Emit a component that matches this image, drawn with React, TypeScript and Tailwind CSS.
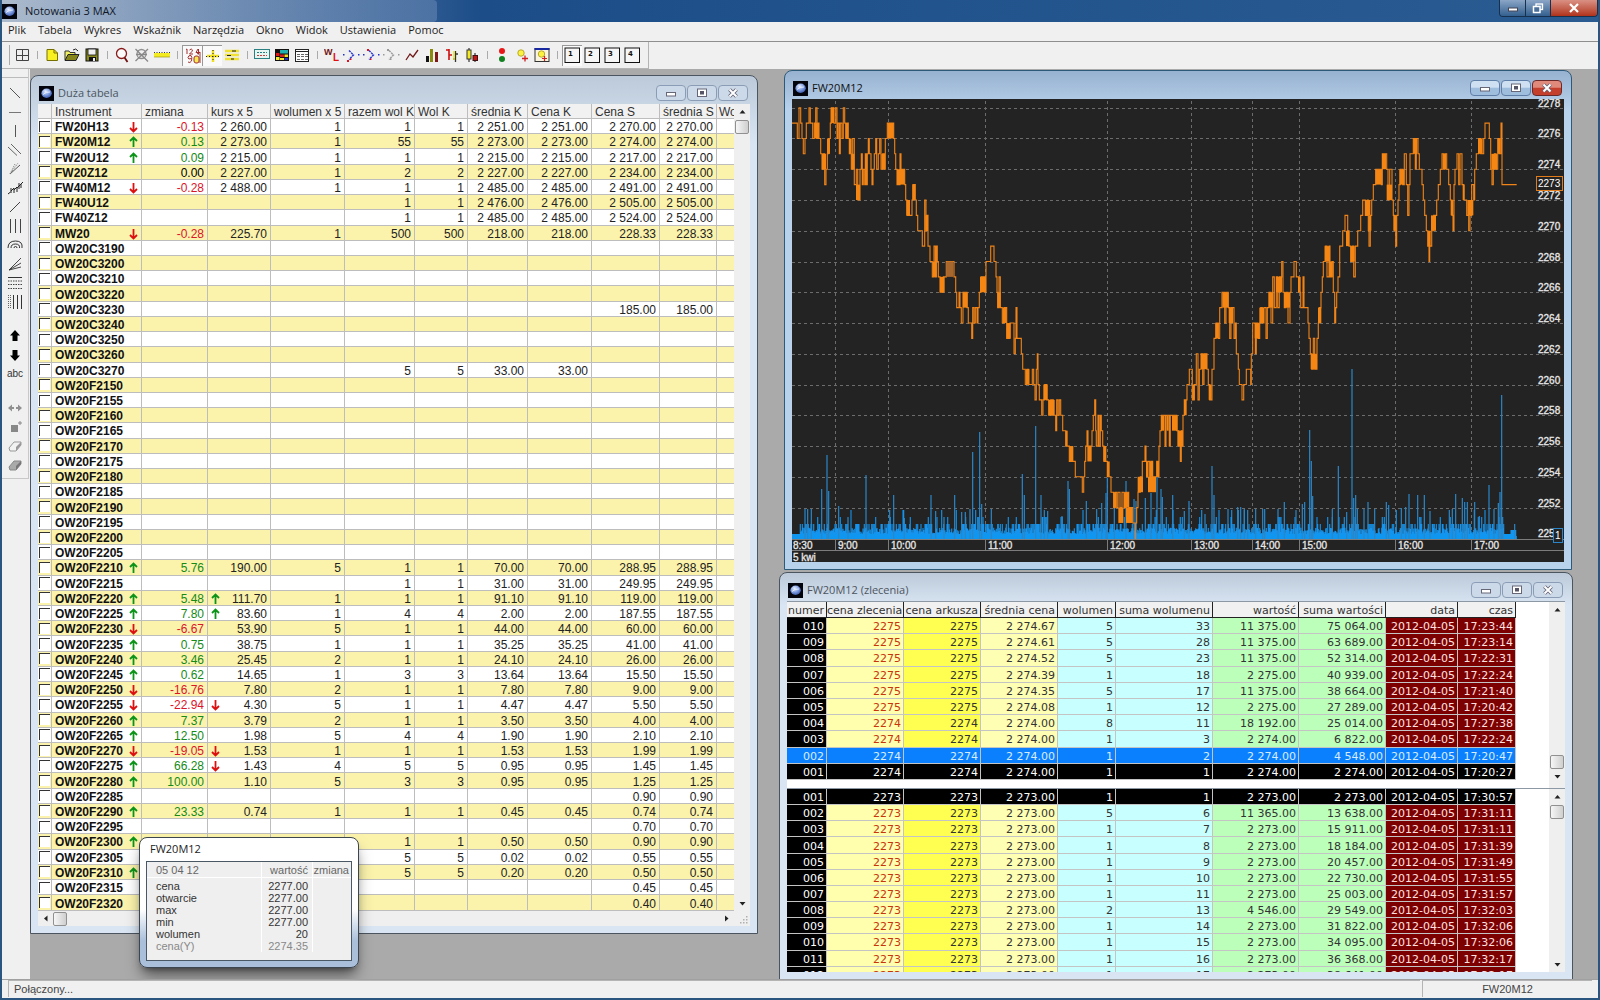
import type { ReactNode } from "react";
import { clsx } from "clsx";

const menuItems = ["Plik", "Tabela", "Wykres", "Wskaźnik", "Narzędzia", "Okno", "Widok", "Ustawienia", "Pomoc"];

/* ---------- icons ---------- */

function Icon({ children, w = 16 }: { children: ReactNode; w?: number }) {
  return (
    <svg width={w} height="16" viewBox={`0 0 ${w} 16`} fill="none" stroke="none" aria-hidden="true">
      {children}
    </svg>
  );
}

function AppIcon() {
  return (
    <svg width="15" height="15" viewBox="0 0 15 15" aria-hidden="true" className="shrink-0">
      <defs>
        <radialGradient id="orb" cx="0.4" cy="0.3" r="0.8">
          <stop offset="0" stopColor="#e6efff" />
          <stop offset="0.5" stopColor="#7f9de0" />
          <stop offset="1" stopColor="#2c4aa0" />
        </radialGradient>
      </defs>
      <rect width="15" height="15" fill="#03040c" />
      <ellipse cx="7.6" cy="7.3" rx="5.2" ry="4.7" fill="url(#orb)" />
      <path d="M4 8.5 Q7 5.5 11 6" stroke="#f4f8ff" strokeWidth="1" fill="none" opacity="0.8" />
    </svg>
  );
}

function DottedArrow({ color, dot }: { color: string; dot: string }) {
  return (
    <Icon w={18}>
      <path d="M6 3.500L10.500 8L6 12.500" stroke={color} strokeWidth="1.400" strokeDasharray="2.200 0.800" />
      <rect x="0" y="7" width="1.500" height="1.500" fill={color} />
      <rect x="15" y="7" width="1.500" height="1.500" fill={color} />
      <rect x="4" y={dot === "top" ? 2 : 13} width="2" height="2" fill={color === "#999" ? "#999" : "#e01020"} />
      <rect x="7" y="11.500" width="1.500" height="1.500" fill={color === "#999" ? "#999" : "#e01020"} />
    </Icon>
  );
}

function NumberBox({ n }: { n: string }) {
  return (
    <svg width="17" height="17" viewBox="0 0 17 17" aria-hidden="true">
      <rect x="1" y="1" width="14.500" height="14.500" fill="#f6f6f6" stroke="#111" />
      <text x="4" y="9" fontSize="7" fontWeight="700" fontFamily="DejaVu Sans, sans-serif" fill="#111">
        {n}
      </text>
    </svg>
  );
}

const toolGroups: { name: string; icon: ReactNode; pressed?: boolean }[][] = [
  [
    {
      name: "Okna",
      icon: (
        <Icon>
          <path d="M2.500 2.500H14.500V13.500H2.500ZM8.500 2.500V13.500M2.500 8.500H14.500" stroke="#444" />
        </Icon>
      ),
    },
  ],
  [
    {
      name: "Nowy",
      icon: (
        <Icon>
          <path d="M3 2.500H10L13.500 6V13.500H3Z" fill="#f8f020" stroke="#777000" />
          <path d="M10 2.500V6H13.500" stroke="#777000" />
        </Icon>
      ),
    },
    {
      name: "Otwórz",
      icon: (
        <Icon>
          <path d="M1 13V4H5L6 5.500H11V7.500" fill="#f0f060" stroke="#333" />
          <path d="M1 13.500L4 7.500H15L12 13.500Z" fill="#85851a" stroke="#222" />
          <path d="M9 3Q12 0.500 14 4" stroke="#222" />
        </Icon>
      ),
    },
    {
      name: "Zapisz",
      icon: (
        <Icon>
          <rect x="2" y="2" width="12" height="12" fill="#8a8a20" stroke="#111" />
          <rect x="4" y="2" width="8" height="6" fill="#eee" stroke="#111" strokeWidth="0.800" />
          <rect x="5" y="10" width="7" height="4" fill="#111" />
          <rect x="9" y="11" width="2" height="3" fill="#eee" />
        </Icon>
      ),
    },
  ],
  [
    {
      name: "Lupa",
      icon: (
        <Icon>
          <circle cx="7.500" cy="6.500" r="5" stroke="#8a1a1a" strokeWidth="1.300" fill="#fafafa" />
          <path d="M10.500 10.500L13.500 15" stroke="#701010" strokeWidth="1.800" />
        </Icon>
      ),
    },
    {
      name: "Cofnij lupę",
      icon: (
        <Icon>
          <circle cx="7.500" cy="7" r="4.500" stroke="#909090" strokeWidth="1.300" />
          <path d="M1.500 2L14 14.500M14 2L1.500 14M2 7.500H13" stroke="#888" strokeWidth="1.300" />
        </Icon>
      ),
    },
    {
      name: "Linijka",
      icon: (
        <Icon>
          <rect x="0" y="6" width="16" height="4" fill="#f4ec20" />
          <path d="M0 5.500H16" stroke="#333" strokeDasharray="1 1.500" />
          <path d="M0 10H16" stroke="#a09a10" strokeWidth="0.700" />
        </Icon>
      ),
    },
  ],
  [
    {
      name: "Wartości",
      pressed: true,
      icon: (
        <Icon>
          <g stroke="#a03030" strokeWidth="1">
            <path d="M1 1.500L2 1V6M4.500 2Q6.500 0 7.500 2Q7.500 3.500 4.500 6H8M13 1L11 4.500H15M13.500 1V6.500" />
            <path d="M6.500 10.500Q3 12 3 9.500Q3.500 7 6 7.500Q7.500 9 6.500 13Q5 15.500 3 14" />
          </g>
          <rect x="9" y="8" width="5" height="7" rx="2" fill="#f8e850" stroke="#a03030" />
          <path d="M12 6L15 4V15" stroke="#a03030" />
        </Icon>
      ),
    },
    {
      name: "Krzyż",
      pressed: true,
      icon: (
        <Icon>
          <path d="M8 2V14M2 8H14" stroke="#f0e020" strokeWidth="2.500" />
          <path d="M8 2V14M1 8.500H15" stroke="#222" strokeDasharray="1 2" />
        </Icon>
      ),
    },
    {
      name: "Poziomy",
      icon: (
        <Icon>
          <path d="M1 4H15M1 8H15M1 12H15" stroke="#f0e030" strokeWidth="2.400" />
          <path d="M8 4H12M3 8.500H7M7 12H10" stroke="#222" strokeWidth="1" />
        </Icon>
      ),
    },
  ],
  [
    {
      name: "Tabelka",
      icon: (
        <Icon>
          <rect x="0.500" y="2.500" width="15" height="9" fill="#e8f4f0" stroke="#2a8080" />
          <path d="M3 5.500H13" stroke="#208080" strokeDasharray="2 1" />
          <path d="M3 8.500H13" stroke="#c04040" strokeDasharray="2 1" />
        </Icon>
      ),
    },
    {
      name: "Kolory",
      icon: (
        <Icon>
          <rect x="1" y="2" width="14" height="12" fill="#111" />
          <path d="M6 3H14V6.500H6Z" fill="#20b0b0" />
          <path d="M2 6H5.500V9H2Z" fill="#e01818" />
          <path d="M6 7.500H10V10H6Z" fill="#d02020" />
          <path d="M10.500 7.500H14V10H10.500Z" fill="#f0e020" />
          <path d="M2 10H5.500V13H2Z" fill="#f4ec30" />
          <path d="M6 11H10V13H6Z" fill="#f4ec30" />
          <path d="M10.500 11H14V13H10.500Z" fill="#2030c0" />
        </Icon>
      ),
    },
    {
      name: "Notowania",
      icon: (
        <Icon>
          <rect x="1.500" y="2.500" width="13" height="12" fill="#fdfdfd" stroke="#222" />
          <path d="M1 4.500H15" stroke="#222" />
          <path d="M3 7.500H14M3 9.500H14M3 12.500H14" stroke="#666" strokeDasharray="3 1" />
        </Icon>
      ),
    },
  ],
  [
    {
      name: "WL",
      icon: (
        <Icon>
          <text x="0" y="8" fontSize="9" fontWeight="700" fontFamily="Liberation Sans, sans-serif" fill="#701010">
            W
          </text>
          <text x="9" y="14" fontSize="10" fontWeight="700" fontFamily="Liberation Sans, sans-serif" fill="#e01010">
            L
          </text>
        </Icon>
      ),
    },
    { name: "Wstecz", icon: <DottedArrow color="#2030d0" dot="bottom" /> },
    { name: "Dalej", icon: <DottedArrow color="#2030d0" dot="top" /> },
    { name: "Stop", icon: <DottedArrow color="#999" dot="top" /> },
    {
      name: "Liniowy",
      icon: (
        <Icon>
          <path d="M2 13L6 7L9 10L14 3" stroke="#701818" strokeWidth="1.300" />
        </Icon>
      ),
    },
    {
      name: "Słupkowy",
      icon: (
        <Icon>
          <rect x="2" y="9" width="3" height="6" fill="#111" />
          <rect x="6" y="2" width="3" height="13" fill="#8a8a10" />
          <rect x="11" y="5" width="3" height="10" fill="#801818" />
        </Icon>
      ),
    },
    {
      name: "OHLC",
      icon: (
        <Icon>
          <path d="M5 2V13M2 3H5M5 8H8" stroke="#d01010" strokeWidth="1.600" />
          <path d="M11.500 4V15M9 12H11M11 7H14" stroke="#333" strokeWidth="1.300" />
          <path d="M10 4V13" stroke="#e8e020" strokeWidth="1.500" />
        </Icon>
      ),
    },
    {
      name: "Świecowy",
      icon: (
        <Icon>
          <path d="M5 1V15" stroke="#111" />
          <rect x="3" y="3" width="4" height="9" fill="#f4ec20" stroke="#333" />
          <path d="M11 6V15" stroke="#111" />
          <rect x="9" y="8.500" width="4.500" height="5" fill="#c01818" stroke="#401010" />
        </Icon>
      ),
    },
  ],
  [
    {
      name: "Światła",
      icon: (
        <Icon>
          <circle cx="8" cy="4" r="3" fill="#e81818" />
          <circle cx="8" cy="12" r="3" fill="#108020" />
        </Icon>
      ),
    },
    {
      name: "Alarm",
      icon: (
        <Icon>
          <circle cx="7" cy="6" r="3.200" fill="#fbf340" stroke="#b8a830" />
          <path d="M8 11.500H14M11 8.500V14.500" stroke="#d02020" strokeWidth="1.300" />
        </Icon>
      ),
    },
    {
      name: "Alarm okna",
      icon: (
        <Icon>
          <rect x="1" y="1.500" width="14" height="13" fill="#f8f4e0" stroke="#333" />
          <rect x="0.500" y="1" width="15" height="2" fill="#1828a0" />
          <circle cx="7.500" cy="7" r="3.200" fill="#fbf340" stroke="#b8a830" />
          <path d="M8 11.500H13M10.500 9V14" stroke="#d02020" strokeWidth="1.200" />
        </Icon>
      ),
    },
  ],
  [
    { name: "Pulpit 1", icon: <NumberBox n="1" />, pressed: true },
    { name: "Pulpit 2", icon: <NumberBox n="2" /> },
    { name: "Pulpit 3", icon: <NumberBox n="3" /> },
    { name: "Pulpit 4", icon: <NumberBox n="4" /> },
  ],
];

const drawGroups: ReactNode[][] = [
  [
    <Icon><path d="M3 3L13 13" stroke="#555" /></Icon>,
    <Icon><path d="M2 8.500H14" stroke="#777" /></Icon>,
    <Icon><path d="M8.500 2V14" stroke="#555" /></Icon>,
    <Icon><path d="M1 5L10 13.500M4 2L14 12" stroke="#555" strokeWidth="0.900" /></Icon>,
    <Icon><path d="M3 13L13 4" stroke="#444" strokeWidth="0.900" /><path d="M3 13L8 3M3 13L11 2" stroke="#777" strokeDasharray="1 1" /></Icon>,
    <Icon w={18}><path d="M2 14L4.500 12M5 13V8M5 11L8 8V13M8 10L11 7V12M11 8L14 5M13 9V3M14 5L17 2M15 8V4" stroke="#222" /></Icon>,
    <Icon><path d="M3 13L13 3" stroke="#444" /></Icon>,
    <Icon><path d="M3.500 1V15M8.500 1V15M13.500 1V15" stroke="#444" /></Icon>,
    <Icon><path d="M1 11Q1 4 8.500 4T15 11M4 11Q4 7 8.500 7T12.500 11M7 11Q7 9.500 8.500 9.500T10 11" stroke="#333" /></Icon>,
    <Icon><path d="M2 14L14 2M2 14L14 7M2 14L14 11" stroke="#333" strokeWidth="0.900" /></Icon>,
    <Icon><path d="M1 2.500H15" stroke="#333" /><path d="M1 6H15M1 9.500H15M1 13.500H15" stroke="#444" strokeDasharray="1.500 1" /></Icon>,
    <Icon><path d="M1.500 1V15M3.500 1V15" stroke="#666" strokeDasharray="1 1" /><path d="M6.500 1V15M10.500 1V15M14.500 1V15" stroke="#333" /></Icon>,
  ],
  [
    <Icon><path d="M8 2L13 7.500H10.500V13H5.500V7.500H3Z" fill="#000" /></Icon>,
    <Icon><path d="M8 14L13 8.500H10.500V3H5.500V8.500H3Z" fill="#000" /></Icon>,
    <span className="text-[10px] leading-4 text-[#333]">abc</span>,
  ],
  [
    <Icon><path d="M1 8L5 4.500V7H7V9H5V11.500ZM15 8L11 4.500V7H9V9H11V11.500Z" fill="#909090" /></Icon>,
    <Icon><path d="M4 6H11V13H4Z" fill="#888" /><path d="M13 2V6M11 4H15" stroke="#888" /></Icon>,
    <Icon><path d="M2 10L7 4H14V7L9 13H3Z" fill="#f2f2f2" stroke="#999" /><path d="M9 9L14 4V7L9 13Z" fill="#999" /></Icon>,
    <Icon><path d="M2 10L7 4H14V7L9 13H3Z" fill="#aaa" stroke="#888" /><path d="M9 9L14 4V7L9 13Z" fill="#777" /></Icon>,
  ],
];

/* ---------- window frame ---------- */

const controlBase = "flex h-4 w-[30px] items-center justify-center rounded-sm border";

function WindowControls({ active }: { active?: boolean }) {
  const normal = active
    ? "border-[#5f7fa8] bg-linear-to-b from-[#cfe0f2] from-45% to-[#9fbddd] to-50%"
    : "border-[#8b9db6] bg-[#ccd9e8]";
  return (
    <div className="flex gap-px pr-[2px]">
      <button type="button" aria-label="Minimalizuj" className={clsx(controlBase, normal)}>
        <svg width="12" height="10" viewBox="0 0 12 10">
          <rect x="1.500" y="4.500" width="9" height="3.500" fill="#fff" stroke="#667" />
        </svg>
      </button>
      <button type="button" aria-label="Maksymalizuj" className={clsx(controlBase, normal)}>
        <svg width="12" height="10" viewBox="0 0 12 10">
          <rect x="1.500" y="1" width="9" height="7.500" fill="#fff" stroke="#667" />
          <rect x="4.500" y="3.500" width="3" height="2.500" fill="#556" stroke="#556" />
        </svg>
      </button>
      <button
        type="button"
        aria-label="Zamknij"
        className={clsx(
          controlBase,
          active ? "border-[#6b2a2a] bg-linear-to-b from-[#e08a7c] from-45% to-[#c4402c] to-50%" : normal
        )}
      >
        <svg width="12" height="10" viewBox="0 0 12 10">
          <path d="M2.500 1.500L9.500 8.500M9.500 1.500L2.500 8.500" stroke="#667" strokeWidth="3.800" />
          <path d="M2.500 1.500L9.500 8.500M9.500 1.500L2.500 8.500" stroke="#fff" strokeWidth="2" />
        </svg>
      </button>
    </div>
  );
}

type ChildWindowProps = { title: string; active?: boolean; className: string; children: ReactNode };

function ChildWindow({ title, active, className, children }: ChildWindowProps) {
  return (
    <section
      className={clsx(
        "absolute flex flex-col rounded-t-lg border px-[7px] pb-[7px]",
        active
          ? "border-[#2c5a78] bg-[#b3cdea] bg-linear-to-b from-[#97b2d0] to-[#b9d2ec] to-8%"
          : "border-[#4b5560] bg-[#d7e3f1] bg-linear-to-b from-[#bccad9] to-[#d9e5f3] to-8%",
        className
      )}
    >
      <header className="flex h-7 shrink-0 items-center gap-1 pt-[6px] pl-px font-[Open_Sans,sans-serif] text-[11px]">
        <AppIcon />
        <h2 className={clsx("flex-1", active ? "text-[#111]" : "text-[#4c5560]")}>{title}</h2>
        <WindowControls active={active} />
      </header>
      <div className="flex min-h-0 flex-1 flex-col">{children}</div>
    </section>
  );
}

/* ---------- scroll bars ---------- */

function Triangle({ d }: { d: string }) {
  return (
    <svg width="15" height="15" viewBox="0 0 15 15" className="shrink-0" aria-hidden="true">
      <path d={d} fill="#222" />
    </svg>
  );
}

const UP = "M4.500 9.500L7.500 6L10.500 9.500Z";
const DOWN = "M4.500 6L7.500 9.500L10.500 6Z";
const LEFT = "M9.500 4.500L6 7.500L9.500 10.500Z";
const RIGHT = "M6 4.500L9.500 7.500L6 10.500Z";
const thumb = "size-[14px] shrink-0 rounded-xs border border-[#909090] bg-linear-to-r from-[#f6f6f6] to-[#cfcfcf]";

function VScroll({ atEnd }: { atEnd?: boolean }) {
  return (
    <div className={clsx("flex w-4 shrink-0 flex-col items-center bg-[#efefef]", atEnd ? "pb-1" : "gap-px")}>
      <Triangle d={UP} />
      {atEnd && <div className="flex-1" />}
      <div className={thumb} />
      {!atEnd && <div className="flex-1" />}
      <Triangle d={DOWN} />
    </div>
  );
}

/* ---------- quotes table ---------- */

type Dir = "up" | "down" | "";
type Quote = { name: string; dir?: Dir; kursDir?: Dir; cells?: string[] };

const quoteColumns = ["zmiana", "kurs x 5", "wolumen x 5", "razem wol K", "Wol K", "średnia K", "Cena K", "Cena S", "średnia S"];

// cells follow the order of quoteColumns
const quotes: Quote[] = [
  { name: "FW20H13", dir: "down", cells: ["-0.13", "2 260.00", "1", "1", "1", "2 251.00", "2 251.00", "2 270.00", "2 270.00"] },
  { name: "FW20M12", dir: "up", cells: ["0.13", "2 273.00", "1", "55", "55", "2 273.00", "2 273.00", "2 274.00", "2 274.00"] },
  { name: "FW20U12", dir: "up", cells: ["0.09", "2 215.00", "1", "1", "1", "2 215.00", "2 215.00", "2 217.00", "2 217.00"] },
  { name: "FW20Z12", cells: ["0.00", "2 227.00", "1", "2", "2", "2 227.00", "2 227.00", "2 234.00", "2 234.00"] },
  { name: "FW40M12", dir: "down", cells: ["-0.28", "2 488.00", "1", "1", "1", "2 485.00", "2 485.00", "2 491.00", "2 491.00"] },
  { name: "FW40U12", cells: ["", "", "", "1", "1", "2 476.00", "2 476.00", "2 505.00", "2 505.00"] },
  { name: "FW40Z12", cells: ["", "", "", "1", "1", "2 485.00", "2 485.00", "2 524.00", "2 524.00"] },
  { name: "MW20", dir: "down", cells: ["-0.28", "225.70", "1", "500", "500", "218.00", "218.00", "228.33", "228.33"] },
  { name: "OW20C3190" },
  { name: "OW20C3200" },
  { name: "OW20C3210" },
  { name: "OW20C3220" },
  { name: "OW20C3230", cells: ["", "", "", "", "", "", "", "185.00", "185.00"] },
  { name: "OW20C3240" },
  { name: "OW20C3250" },
  { name: "OW20C3260" },
  { name: "OW20C3270", cells: ["", "", "", "5", "5", "33.00", "33.00", "", ""] },
  { name: "OW20F2150" },
  { name: "OW20F2155" },
  { name: "OW20F2160" },
  { name: "OW20F2165" },
  { name: "OW20F2170" },
  { name: "OW20F2175" },
  { name: "OW20F2180" },
  { name: "OW20F2185" },
  { name: "OW20F2190" },
  { name: "OW20F2195" },
  { name: "OW20F2200" },
  { name: "OW20F2205" },
  { name: "OW20F2210", dir: "up", cells: ["5.76", "190.00", "5", "1", "1", "70.00", "70.00", "288.95", "288.95"] },
  { name: "OW20F2215", cells: ["", "", "", "1", "1", "31.00", "31.00", "249.95", "249.95"] },
  { name: "OW20F2220", dir: "up", kursDir: "up", cells: ["5.48", "111.70", "1", "1", "1", "91.10", "91.10", "119.00", "119.00"] },
  { name: "OW20F2225", dir: "up", kursDir: "up", cells: ["7.80", "83.60", "1", "4", "4", "2.00", "2.00", "187.55", "187.55"] },
  { name: "OW20F2230", dir: "down", cells: ["-6.67", "53.90", "5", "1", "1", "44.00", "44.00", "60.00", "60.00"] },
  { name: "OW20F2235", dir: "up", cells: ["0.75", "38.75", "1", "1", "1", "35.25", "35.25", "41.00", "41.00"] },
  { name: "OW20F2240", dir: "up", cells: ["3.46", "25.45", "2", "1", "1", "24.10", "24.10", "26.00", "26.00"] },
  { name: "OW20F2245", dir: "up", cells: ["0.62", "14.65", "1", "3", "3", "13.64", "13.64", "15.50", "15.50"] },
  { name: "OW20F2250", dir: "down", cells: ["-16.76", "7.80", "2", "1", "1", "7.80", "7.80", "9.00", "9.00"] },
  { name: "OW20F2255", dir: "down", kursDir: "down", cells: ["-22.94", "4.30", "5", "1", "1", "4.47", "4.47", "5.50", "5.50"] },
  { name: "OW20F2260", dir: "up", cells: ["7.37", "3.79", "2", "1", "1", "3.50", "3.50", "4.00", "4.00"] },
  { name: "OW20F2265", dir: "up", cells: ["12.50", "1.98", "5", "4", "4", "1.90", "1.90", "2.10", "2.10"] },
  { name: "OW20F2270", dir: "down", kursDir: "down", cells: ["-19.05", "1.53", "1", "1", "1", "1.53", "1.53", "1.99", "1.99"] },
  { name: "OW20F2275", dir: "up", kursDir: "down", cells: ["66.28", "1.43", "4", "5", "5", "0.95", "0.95", "1.45", "1.45"] },
  { name: "OW20F2280", dir: "up", cells: ["100.00", "1.10", "5", "3", "3", "0.95", "0.95", "1.25", "1.25"] },
  { name: "OW20F2285", cells: ["", "", "", "", "", "", "", "0.90", "0.90"] },
  { name: "OW20F2290", dir: "up", cells: ["23.33", "0.74", "1", "1", "1", "0.45", "0.45", "0.74", "0.74"] },
  { name: "OW20F2295", cells: ["", "", "", "", "", "", "", "0.70", "0.70"] },
  { name: "OW20F2300", dir: "up", cells: ["", "", "", "1", "1", "0.50", "0.50", "0.90", "0.90"] },
  { name: "OW20F2305", cells: ["", "", "", "5", "5", "0.02", "0.02", "0.55", "0.55"] },
  { name: "OW20F2310", dir: "up", cells: ["", "", "", "5", "5", "0.20", "0.20", "0.50", "0.50"] },
  { name: "OW20F2315", cells: ["", "", "", "", "", "", "", "0.45", "0.45"] },
  { name: "OW20F2320", cells: ["", "", "", "", "", "", "", "0.40", "0.40"] },
];

function DirArrow({ dir }: { dir?: Dir }) {
  if (!dir) return null;
  return (
    <svg width="9" height="12" viewBox="0 0 9 12" aria-hidden="true" fill="none" strokeWidth="1.8">
      {dir === "up" ? (
        <path d="M4.500 11V1.500M1 5L4.500 1.500L8 5" stroke="#0c9418" />
      ) : (
        <path d="M4.500 1V10.500M1 7L4.500 10.500L8 7" stroke="#dc1010" />
      )}
    </svg>
  );
}

function changeColor(value: string) {
  if (value.startsWith("-")) return "text-[#dc1428]";
  return value === "0.00" ? "text-black" : "text-[#168a16]";
}

const quoteCell = "border-r border-b border-[#bdbdbd] p-0 whitespace-nowrap overflow-hidden";

function QuotesTable() {
  return (
    <div className="flex min-h-0 flex-1">
      <div className="min-w-0 flex-1 overflow-hidden">
        <table className="h-full w-full table-fixed border-separate border-spacing-0 bg-white text-xs leading-[12px]">
          <colgroup>
            <col className="w-[14px]" />
            <col className="w-[90px]" />
            <col className="w-[66px]" />
            <col className="w-[63px]" />
            <col className="w-[74px]" />
            <col className="w-[70px]" />
            <col className="w-[53px]" />
            <col className="w-[60px]" />
            <col className="w-[64px]" />
            <col className="w-[68px]" />
            <col className="w-[57px]" />
            <col />
          </colgroup>
          <thead>
            <tr className="bg-[#f1f1f1] text-left text-[#333]">
              <td className={quoteCell} />
              <th className={clsx(quoteCell, "pt-[2px] pl-[3px] font-normal")}>Instrument</th>
              {quoteColumns.map((c) => (
                <th key={c} className={clsx(quoteCell, "pt-[2px] pl-[3px] font-normal")}>
                  {c}
                </th>
              ))}
              <th className="overflow-hidden border-b border-[#bdbdbd] p-0 pt-[2px] pl-[2px] font-normal whitespace-nowrap">Wol S</th>
            </tr>
          </thead>
          <tbody>
            {quotes.map((q) => (
              <tr key={q.name} className="bg-white even:bg-[#fbf3ac]">
                <td className={quoteCell}>
                  <input
                    type="checkbox"
                    id={q.name}
                    className="mx-px block size-[11px] appearance-none border-t border-l border-[#333] bg-white"
                  />
                </td>
                <td className={clsx(quoteCell, "pt-[2px] pr-[3px] pl-[3px]")}>
                  <div className="flex items-center justify-between">
                    <label htmlFor={q.name} className="font-bold text-[#111]">
                      {q.name}
                    </label>
                    <DirArrow dir={q.dir} />
                  </div>
                </td>
                {quoteColumns.map((c, i) => {
                  const value = q.cells?.[i] ?? "";
                  return (
                    <td key={c} className={clsx(quoteCell, "pt-[2px] pr-[3px] text-right", i === 0 ? changeColor(value) : "text-[#222]")}>
                      {i === 1 && q.kursDir ? (
                        <div className="flex items-center justify-between pl-[3px]">
                          <DirArrow dir={q.kursDir} />
                          {value}
                        </div>
                      ) : (
                        value
                      )}
                    </td>
                  );
                })}
                <td className="border-b border-[#bdbdbd] p-0" />
              </tr>
            ))}
          </tbody>
        </table>
      </div>
      <VScroll />
    </div>
  );
}

/* ---------- intraday chart ---------- */

const ORIGIN = 780; // x of tick 0, three ticks per pixel
const TOP = 107.7; // y of 2278
const UNIT = 15.38;
const BASE = 539;

const px = (tick: number) => ORIGIN + tick / 3;
const py = (price: number) => TOP + (78 - price) * UNIT;

// [tick, price - 2200]
const ticks: [number, number][] = [
  [36, 77], [52, 76], [57, 78], [62, 77], [66, 76], [70, 75], [75, 76], [79, 77], [87, 78], [91, 77], [98, 76], [103, 77], [107, 78], [111, 76], [114, 77], [117, 76], [122, 75], [126, 74], [130, 75], [134, 73], [138, 74], [142, 75], [146, 76], [151, 77], [154, 78], [162, 77], [167, 78], [171, 76], [174, 77], [178, 75], [181, 77], [186, 76], [190, 78], [194, 77], [198, 76], [202, 77], [205, 76], [208, 75], [214, 74], [218, 76], [223, 73], [229, 74], [233, 72], [240, 74], [244, 75], [247, 73], [250, 74], [254, 73], [256, 75], [259, 73], [262, 75], [265, 76], [268, 75], [273, 74], [276, 73], [279, 74], [283, 75], [287, 76], [290, 74], [295, 75], [299, 76], [303, 74], [308, 75], [313, 74], [316, 76], [322, 77], [341, 76], [344, 75], [347, 74], [351, 73], [360, 75], [363, 74], [374, 73], [377, 72], [381, 71], [396, 72], [399, 73], [406, 72], [409, 71], [413, 70], [427, 69], [431, 69], [434, 72], [438, 70], [441, 71], [444, 69], [450, 68], [457, 67], [462, 69], [466, 67], [469, 69], [472, 68], [475, 67], [480, 66], [490, 67], [499, 68], [522, 67], [527, 66], [530, 65], [537, 66], [540, 65], [544, 64], [549, 66], [561, 65], [565, 64], [575, 63], [578, 65], [582, 64], [586, 65], [591, 64], [594, 65], [598, 66], [603, 67], [616, 66], [618, 68], [632, 69], [642, 68], [648, 67], [651, 66], [653, 65], [657, 67], [661, 65], [667, 64], [672, 65], [680, 63], [690, 64], [702, 62], [706, 63], [708, 65], [711, 63], [720, 63], [724, 62], [728, 61], [736, 60], [741, 61], [746, 60], [757, 61], [761, 60], [765, 59], [769, 61], [772, 62], [774, 60], [778, 59], [785, 58], [789, 59], [794, 60], [800, 59], [806, 58], [812, 59], [820, 58], [827, 57], [830, 59], [834, 58], [838, 59], [842, 58], [848, 57], [857, 56], [868, 55], [880, 55], [886, 54], [907, 53], [911, 54], [914, 55], [917, 56], [921, 57], [924, 56], [936, 57], [940, 58], [944, 59], [947, 57], [949, 56], [954, 58], [957, 56], [961, 58], [964, 57], [968, 56], [972, 55], [982, 54], [991, 54], [993, 53], [1001, 52], [1006, 53], [1010, 52], [1014, 53], [1020, 52], [1026, 53], [1032, 52], [1038, 53], [1046, 52], [1058, 51], [1070, 52], [1074, 53], [1081, 54], [1087, 55], [1095, 56], [1098, 55], [1100, 54], [1104, 55], [1109, 54], [1113, 55], [1118, 54], [1130, 55], [1135, 54], [1137, 56], [1140, 57], [1144, 58], [1155, 56], [1158, 58], [1168, 56], [1171, 58], [1190, 57], [1196, 56], [1201, 55], [1204, 57], [1207, 56], [1209, 58], [1213, 59], [1221, 60], [1228, 61], [1237, 59], [1243, 60], [1249, 62], [1254, 59], [1258, 61], [1263, 62], [1268, 60], [1272, 62], [1281, 61], [1285, 60], [1289, 59], [1296, 61], [1302, 63], [1308, 64], [1315, 63], [1319, 65], [1326, 66], [1334, 64], [1338, 66], [1345, 65], [1349, 63], [1353, 65], [1360, 65], [1362, 63], [1366, 64], [1369, 62], [1375, 61], [1378, 60], [1386, 59], [1391, 60], [1399, 61], [1412, 60], [1414, 62], [1418, 64], [1426, 62], [1429, 64], [1434, 63], [1439, 64], [1442, 65], [1447, 64], [1452, 65], [1458, 63], [1462, 65], [1467, 66], [1473, 64], [1478, 67], [1483, 65], [1489, 67], [1493, 65], [1498, 67], [1505, 68], [1509, 66], [1513, 65], [1518, 66], [1524, 64], [1530, 66], [1533, 67], [1542, 68], [1549, 67], [1556, 66], [1562, 65], [1569, 67], [1572, 65], [1578, 65], [1584, 64], [1587, 63], [1591, 62], [1595, 61], [1600, 63], [1604, 61], [1611, 63], [1615, 64], [1618, 65], [1623, 66], [1627, 67], [1630, 68], [1636, 69], [1641, 67], [1647, 69], [1650, 67], [1656, 68], [1660, 66], [1664, 64], [1667, 65], [1670, 66], [1674, 67], [1679, 69], [1688, 70], [1695, 71], [1703, 70], [1707, 69], [1712, 68], [1717, 69], [1721, 67], [1726, 69], [1733, 70], [1742, 71], [1748, 72], [1756, 71], [1762, 72], [1765, 70], [1767, 69], [1771, 71], [1775, 72], [1780, 73], [1787, 74], [1804, 73], [1807, 75], [1820, 74], [1824, 72], [1829, 74], [1836, 72], [1840, 71], [1844, 70], [1847, 69], [1850, 71], [1854, 72], [1857, 73], [1861, 74], [1868, 73], [1873, 75], [1879, 73], [1883, 71], [1887, 73], [1890, 75], [1900, 76], [1906, 74], [1909, 76], [1914, 75], [1918, 74], [1926, 73], [1930, 72], [1934, 71], [1939, 70], [1943, 69], [1947, 68], [1949, 69], [1955, 70], [1961, 71], [1970, 72], [1975, 73], [1981, 74], [1986, 75], [1991, 74], [1995, 75], [2000, 74], [2006, 73], [2011, 72], [2016, 71], [2019, 70], [2022, 73], [2025, 74], [2031, 75], [2036, 73], [2040, 75], [2046, 73], [2051, 72], [2060, 71], [2066, 70], [2070, 71], [2075, 73], [2081, 72], [2084, 74], [2089, 75], [2096, 76], [2102, 75], [2107, 75], [2111, 76], [2115, 77], [2128, 76], [2132, 74], [2136, 73], [2140, 74], [2143, 75], [2148, 74], [2153, 76], [2158, 75], [2163, 77], [2166, 73], [2210, 73],
];

// stretches where the price flips on every tick: [from, to, high]
const dense: [number, number, number][] = [
  [103, 112, 77], [126, 138, 75], [141, 150, 76], [152, 162, 78], [196, 204, 77], [207, 215, 76], [214, 223, 75], [228, 240, 73], [304, 314, 75], [323, 341, 77], [351, 374, 74], [379, 390, 72], [397, 405, 73], [436, 443, 71], [458, 470, 68], [480, 494, 67], [549, 563, 66], [600, 616, 67], [652, 662, 66], [668, 680, 65], [680, 692, 64], [738, 748, 61], [790, 803, 60], [806, 824, 59], [857, 863, 57], [868, 880, 56], [922, 935, 56], [970, 979, 56], [981, 989, 55], [1000, 1008, 53], [1015, 1030, 52], [1032, 1047, 53], [1038, 1057, 52], [1073, 1089, 54], [1098, 1104, 55], [1109, 1119, 55], [1104, 1128, 54], [1130, 1137, 55], [1143, 1152, 58], [1160, 1166, 58], [1176, 1193, 58], [1192, 1208, 57], [1212, 1220, 59], [1237, 1244, 60], [1263, 1281, 62], [1286, 1295, 60], [1306, 1316, 64], [1327, 1345, 66], [1346, 1359, 65], [1424, 1439, 64], [1438, 1452, 65], [1466, 1480, 66], [1488, 1506, 67], [1512, 1530, 66], [1554, 1562, 67], [1592, 1611, 62], [1614, 1624, 65], [1634, 1648, 69], [1648, 1658, 68], [1698, 1708, 70], [1712, 1724, 69], [1755, 1771, 72], [1765, 1774, 71], [1787, 1803, 74], [1806, 1818, 75], [1820, 1836, 73], [1840, 1850, 71], [1858, 1872, 74], [1900, 1912, 76], [1944, 1952, 70], [1953, 1968, 71], [1988, 1998, 75], [2012, 2020, 72], [2048, 2054, 73], [2062, 2080, 72], [2094, 2108, 76], [2134, 2151, 75], [2154, 2162, 76],
];

// volume peaks: [tick, height]
const peaks: [number, number][] = [
  [75, 30], [83, 30], [94, 30], [125, 50], [141, 84], [146, 48], [176, 33], [204, 22], [258, 64], [341, 44], [373, 21], [453, 44], [467, 28], [492, 22], [524, 44], [545, 27], [556, 27], [570, 30], [578, 87], [599, 107], [605, 35], [634, 30], [727, 65], [733, 44], [767, 113], [783, 44], [793, 29], [803, 28], [846, 23], [864, 58], [868, 50], [919, 38], [950, 30], [965, 36], [978, 46], [982, 61], [1003, 33], [1038, 58], [1062, 40], [1068, 38], [1096, 41], [1113, 46], [1131, 63], [1143, 50], [1147, 42], [1178, 44], [1213, 28], [1227, 38], [1275, 25], [1296, 73], [1302, 44], [1344, 30], [1373, 32], [1382, 32], [1393, 30], [1403, 29], [1427, 30], [1448, 30], [1454, 30], [1494, 30], [1513, 37], [1548, 29], [1567, 35], [1574, 37], [1589, 109], [1594, 78], [1598, 43], [1657, 30], [1675, 73], [1700, 27], [1716, 170], [1721, 41], [1727, 44], [1732, 30], [1752, 30], [1764, 37], [1784, 30], [1819, 37], [1826, 34], [1864, 31], [1877, 32], [1887, 45], [1913, 44], [1933, 44], [1950, 28], [2008, 29], [2017, 30], [2027, 45], [2047, 41], [2054, 37], [2062, 37], [2084, 37], [2098, 23], [2127, 54], [2142, 30], [2155, 36], [2160, 47], [2165, 144], [2168, 22], [2204, 15],
];

const pricePath = ticks.map(([t, p], i) => (i ? `H${px(t).toFixed(1)}V${py(p).toFixed(1)}` : `M${px(t)} ${py(p)}`)).join("");

function volumePath() {
  let seed = 7;
  let d = "";
  for (let t = 37; t < 2210; t += 2) {
    seed = (seed * 16807) % 2147483647;
    const r = seed / 2147483647;
    let h = 5 + r * 9;
    if (r > 0.7) h = 15;
    if (r > 0.93) h = 22;
    if (r > 0.98) h = 29;
    if (t < 60) h = 4;
    if (t > 2172) h = t > 2192 && t < 2208 ? 9 : 3;
    d += `M${px(t).toFixed(1)} ${BASE}v-${h.toFixed(1)}`;
  }
  return d;
}

const hours: [number, string][] = [
  [836, "9:00"], [889, "10:00"], [986, "11:00"], [1108, "12:00"], [1192, "13:00"], [1253, "14:00"], [1300, "15:00"], [1396, "16:00"], [1472, "17:00"],
];
const priceMarks = [78, 76, 74, 72, 70, 68, 66, 64, 62, 60, 58, 56, 54, 52, 50];

function IntradayChart() {
  return (
    <svg viewBox="792 99 772 463" preserveAspectRatio="none" className="block h-full w-full bg-[#232323]" fontFamily="Liberation Sans, sans-serif" fontSize="10">
      <g stroke="#6c6c6c" strokeDasharray="3 3" fill="none" shapeRendering="crispEdges">
        {priceMarks.slice(0, 14).map((p) => (
          <path key={p} d={`M792 ${Math.round(py(p)) + 0.5}H1564`} />
        ))}
        {hours.map(([x]) => (
          <path key={x} d={`M${x - 0.5} 101V539`} />
        ))}
      </g>
      <path d={volumePath()} stroke="#1494ee" strokeWidth="1.1" />
      <rect x="792" y="534" width="723" height="5" fill="#0f96f0" />
      {peaks.map(([t, h]) => (
        <path key={t} d={`M${px(t)} ${BASE}v-${h}`} stroke="#2a86c8" strokeWidth="1.2" />
      ))}
      <path d={pricePath} fill="none" stroke="#f08418" strokeWidth="1.1" strokeLinejoin="miter" />
      {dense.map(([a, b, hi]) => (
        <rect key={`${a}-${hi}`} x={px(a)} y={py(hi)} width={(b - a) / 3} height={UNIT} fill="#f58614" />
      ))}
      <rect x={px(499)} y={py(68)} width="7" height={UNIT} fill="#a8672f" />
      <path d={`M${px(1066)} ${py(51)}V539`} stroke="#a08a70" strokeWidth="2" />

      {/* time axis */}
      <path d="M792 539.500H1564M792 550.500H1564" stroke="#7c7c7c" />
      <g fill="#e8e8e8" stroke="#e8e8e8" strokeWidth="0.3">
        <text x="793" y="549">8:30</text>
        {hours.map(([x, label]) => (
          <text key={x} x={x + 2} y="549">
            {label}
          </text>
        ))}
        <text x="793" y="561">5 kwi</text>
      </g>
      <path d={hours.map(([x]) => `M${x - 0.5} 540V550`).join("")} stroke="#7c7c7c" />

      {/* price axis */}
      <g fill="#e8e8e8" stroke="#e8e8e8" strokeWidth="0.3">
        {priceMarks.map((p) => (
          <text key={p} x="1538" y={Math.round(py(p)) - 1}>
            {2200 + p}
          </text>
        ))}
      </g>
      <rect x="1536.500" y="176.500" width="26" height="14" fill="#232323" stroke="#e07c1c" />
      <text x="1538" y="187" fill="#fff">
        2273
      </text>
      <rect x="1553.500" y="528.500" width="9" height="14" fill="#232323" stroke="#2a86c8" />
      <text x="1555" y="539" fill="#fff">
        1
      </text>
    </svg>
  );
}

/* ---------- order book ---------- */

const orderColumns = ["numer", "cena zlecenia", "cena arkusza", "średnia cena", "wolumen", "suma wolumenu", "wartość", "suma wartości", "data", "czas"];

const D = "2012-04-05";
const sellOrders = [
  ["010", "2275", "2275", "2 274.67", "5", "33", "11 375.00", "75 064.00", D, "17:23:44"],
  ["009", "2275", "2275", "2 274.61", "5", "28", "11 375.00", "63 689.00", D, "17:23:14"],
  ["008", "2275", "2275", "2 274.52", "5", "23", "11 375.00", "52 314.00", D, "17:22:31"],
  ["007", "2275", "2275", "2 274.39", "1", "18", "2 275.00", "40 939.00", D, "17:22:24"],
  ["006", "2275", "2275", "2 274.35", "5", "17", "11 375.00", "38 664.00", D, "17:21:40"],
  ["005", "2275", "2275", "2 274.08", "1", "12", "2 275.00", "27 289.00", D, "17:20:42"],
  ["004", "2274", "2274", "2 274.00", "8", "11", "18 192.00", "25 014.00", D, "17:27:38"],
  ["003", "2274", "2274", "2 274.00", "1", "3", "2 274.00", "6 822.00", D, "17:22:24"],
  ["002", "2274", "2274", "2 274.00", "1", "2", "2 274.00", "4 548.00", D, "17:20:47"],
  ["001", "2274", "2274", "2 274.00", "1", "1", "2 274.00", "2 274.00", D, "17:20:27"],
];
const buyOrders = [
  ["001", "2273", "2273", "2 273.00", "1", "1", "2 273.00", "2 273.00", D, "17:30:57"],
  ["002", "2273", "2273", "2 273.00", "5", "6", "11 365.00", "13 638.00", D, "17:31:11"],
  ["003", "2273", "2273", "2 273.00", "1", "7", "2 273.00", "15 911.00", D, "17:31:11"],
  ["004", "2273", "2273", "2 273.00", "1", "8", "2 273.00", "18 184.00", D, "17:31:39"],
  ["005", "2273", "2273", "2 273.00", "1", "9", "2 273.00", "20 457.00", D, "17:31:49"],
  ["006", "2273", "2273", "2 273.00", "1", "10", "2 273.00", "22 730.00", D, "17:31:55"],
  ["007", "2273", "2273", "2 273.00", "1", "11", "2 273.00", "25 003.00", D, "17:31:57"],
  ["008", "2273", "2273", "2 273.00", "2", "13", "4 546.00", "29 549.00", D, "17:32:03"],
  ["009", "2273", "2273", "2 273.00", "1", "14", "2 273.00", "31 822.00", D, "17:32:06"],
  ["010", "2273", "2273", "2 273.00", "1", "15", "2 273.00", "34 095.00", D, "17:32:06"],
  ["011", "2273", "2273", "2 273.00", "1", "16", "2 273.00", "36 368.00", D, "17:32:17"],
  ["012", "2273", "2273", "2 273.00", "1", "17", "2 273.00", "38 641.00", D, "17:32:17"],
];

const orderStyles = [
  "bg-black text-white",
  "bg-[#ffffae] text-[#c8340c]",
  "bg-[#ffff52] text-[#333]",
  "bg-[#ffffb4] text-[#333]",
  "bg-[#c8ffff] text-[#333]",
  "bg-[#c8ffff] text-[#333]",
  "bg-[#bcffba] text-[#333]",
  "bg-[#bcffba] text-[#333]",
  "bg-[#7c0000] text-[#ffe0e0]",
  "bg-[#7c0000] text-[#ffe0e0]",
];

type OrdersTableProps = { rows: string[][]; head?: boolean; selected?: string; className: string };

function OrdersTable({ rows, head, selected, className }: OrdersTableProps) {
  return (
    <table
      className={clsx(
        "w-[729px] table-fixed border-separate border-spacing-0 text-right font-[DejaVu_Sans,sans-serif] text-[11px] leading-[12px]",
        className
      )}
    >
      <colgroup>
        <col className="w-[40px]" />
        <col className="w-[77px]" />
        <col className="w-[77px]" />
        <col className="w-[77px]" />
        <col className="w-[58px]" />
        <col className="w-[97px]" />
        <col className="w-[86px]" />
        <col className="w-[87px]" />
        <col className="w-[72px]" />
        <col className="w-[58px]" />
      </colgroup>
      {head && (
        <thead>
          <tr>
            {orderColumns.map((c) => (
              <th key={c} className="border-r border-b border-[#222] bg-[#f1f1f1] p-0 pt-[3px] pr-[2px] text-right font-normal whitespace-nowrap text-[#333]">
                {c}
              </th>
            ))}
          </tr>
        </thead>
      )}
      <tbody>
        {rows.map((row) => (
          <tr key={row[0]}>
            {row.map((value, i) => (
              <td
                key={orderColumns[i]}
                className={clsx(
                  "border-r border-b border-[#c4c4c4] p-0 pt-[3px] pr-[2px] whitespace-nowrap",
                  row[0] === selected ? "bg-[#0a80ff] text-[#d8ecff]" : row[0] === "001" ? "bg-black text-white" : orderStyles[i]
                )}
              >
                {value}
              </td>
            ))}
          </tr>
        ))}
      </tbody>
    </table>
  );
}

/* ---------- tooltip ---------- */

const infoRows = [
  ["cena", "2277.00"],
  ["otwarcie", "2277.00"],
  ["max", "2277.00"],
  ["min", "2277.00"],
  ["wolumen", "20"],
  ["cena(Y)", "2274.35"],
];

function InfoPopup() {
  return (
    <div className="absolute top-[768px] left-[109px] flex h-[131px] w-[220px] flex-col rounded-lg border border-[#3c4650] bg-linear-to-b from-white from-55% to-[#a9bfda] to-80% px-[6px] pb-[6px] shadow-lg shadow-black/50">
      <h2 className="h-[23px] shrink-0 pl-1 font-[Open_Sans,sans-serif] text-[11px] leading-[22px] text-[#222]">FW20M12</h2>
      <div className="flex-1 border border-[#4a5866] bg-[#efefef] pb-1">
        <table className="w-full table-fixed border-separate border-spacing-0 text-[11px] leading-[12px] text-[#333]">
          <colgroup>
            <col className="w-[115px]" />
            <col className="w-[51px]" />
            <col />
          </colgroup>
          <thead>
            <tr className="h-4 text-[#666]">
              <th className="border-r border-b border-white p-0 pl-[9px] text-left font-normal">05 04 12</th>
              <th className="border-r border-b border-white p-0 pr-1 text-right font-normal">wartość</th>
              <th className="border-b border-white p-0 pr-[2px] text-right font-normal">zmiana</th>
            </tr>
          </thead>
          <tbody>
            {infoRows.map(([label, value]) => (
              <tr key={label} className="first:h-[14px] last:text-[#888]">
                <td className="border-r border-white p-0 pl-[9px] align-bottom">{label}</td>
                <td className="border-r border-white p-0 pr-1 text-right align-bottom">{value}</td>
                <td className="p-0" />
              </tr>
            ))}
          </tbody>
        </table>
      </div>
    </div>
  );
}

/* ---------- application shell ---------- */

export default function App() {
  return (
    <div className="flex h-screen flex-col overflow-hidden border-x-2 border-b-2 border-[#2a557f] bg-[#f0f0f0] font-[Liberation_Sans,Arial,sans-serif] text-[#222]">
      <header className="flex h-[22px] shrink-0 items-center bg-linear-to-r from-[#a4b4c8] via-[#1c4d88] via-30% to-[#2a5c92]">
        <div className="flex h-full w-[435px] items-center gap-2 rounded-r bg-linear-to-r from-white/10 to-[#7f9cc4]/40">
          <AppIcon />
          <h1 className="font-[Open_Sans,sans-serif] text-[11px] text-[#101828]">Notowania 3 MAX</h1>
        </div>
        <div className="ml-auto flex self-start overflow-hidden rounded-b border border-t-0 border-[#16304e]">
          <button type="button" aria-label="Minimalizuj" className="flex h-4 w-[26px] items-center justify-center border-r border-[#16304e] bg-linear-to-b from-[#8ba6c6] to-[#33608f]">
            <svg width="12" height="10" viewBox="0 0 12 10"><rect x="1.500" y="5" width="9" height="3" fill="#fff" stroke="#445" /></svg>
          </button>
          <button type="button" aria-label="Przywróć" className="flex h-4 w-[25px] items-center justify-center border-r border-[#16304e] bg-linear-to-b from-[#8ba6c6] to-[#33608f]">
            <svg width="12" height="11" viewBox="0 0 12 11">
              <rect x="4" y="1" width="6.500" height="5.500" fill="#7a98ba" stroke="#fff" strokeWidth="1.300" />
              <rect x="1.500" y="3.500" width="6.500" height="6" fill="#4a6f98" stroke="#fff" strokeWidth="1.500" />
            </svg>
          </button>
          <button type="button" aria-label="Zamknij" className="flex h-4 w-[46px] items-center justify-center bg-linear-to-b from-[#d99084] to-[#b03018]">
            <svg width="12" height="10" viewBox="0 0 12 10"><path d="M2 1L10 9M10 1L2 9" stroke="#fff" strokeWidth="2.200" /></svg>
          </button>
        </div>
      </header>

      <nav className="flex h-5 shrink-0 items-start border-b border-[#8e8e8e] font-[Open_Sans,sans-serif] text-[11px] text-[#1c1c1c]">
        {menuItems.map((item) => (
          <button key={item} type="button" className="px-[6px] leading-4">
            {item}
          </button>
        ))}
      </nav>

      <div className="flex h-[27px] shrink-0 items-center">
        <div className="flex h-full items-center border-r border-b border-[#b4b4b4] pr-[6px] pl-[6px]">
          <div className="mr-[2px] h-5 w-[2px] border-r border-[#aaa]" />
          {toolGroups.map((group, g) => (
            <div key={g} className="flex items-center">
              {g > 0 && <div className="mx-1 h-2 w-[2px] border-r border-[#aaa]" />}
              {group.map((tool) => (
                <button
                  key={tool.name}
                  type="button"
                  aria-label={tool.name}
                  className={clsx(
                    "flex h-[21px] w-5 items-center justify-center",
                    tool.pressed && "border-t border-l border-[#999] bg-[#fafafa]"
                  )}
                >
                  {tool.icon}
                </button>
              ))}
            </div>
          ))}
        </div>
      </div>

      <main className="flex min-h-0 flex-1">
        <aside className="w-7 shrink-0">
          <div className="flex w-[27px] flex-col items-center gap-[15px] border-r border-b border-[#c8c8c8] pt-2 pb-1">
            {drawGroups.map((group, g) => (
              <div key={g} className={clsx("flex w-full flex-col items-center", g === 0 && "border-t border-[#bbb] pt-[5px]")}>
                {group.map((icon, i) => (
                  <button key={i} type="button" className="flex h-[19px] w-5 items-center justify-center">
                    {icon}
                  </button>
                ))}
              </div>
            ))}
          </div>
        </aside>

        <div className="relative min-w-0 flex-1 overflow-hidden bg-[#aaaaaa]">
          <ChildWindow title="Duża tabela" className="top-[6px] left-0 h-[859px] w-[728px]">
            <QuotesTable />
            <div className="flex h-[15px] shrink-0 items-center bg-[#efefef]">
              <Triangle d={LEFT} />
              <div className={thumb} />
              <div className="flex-1" />
              <Triangle d={RIGHT} />
              <svg width="16" height="16" viewBox="0 0 16 16" aria-hidden="true">
                <path d="M12 5h1.500v1.500h-1.500zM9 8h1.500v1.500h-1.500zM12 8h1.500v1.500h-1.500zM6 11h1.500v1.500h-1.500zM9 11h1.500v1.500h-1.500zM12 11h1.500v1.500h-1.500z" fill="#b0b0b0" />
              </svg>
            </div>
          </ChildWindow>

          <ChildWindow title="FW20M12" active className="top-px left-[754px] h-[500px] w-[788px]">
            <IntradayChart />
          </ChildWindow>

          <ChildWindow title="FW20M12 (zlecenia)" className="top-[503px] left-[749px] h-[408px] w-[794px]">
            <div className="flex shrink-0 justify-between border-t border-[#8d98a5] bg-white">
              <OrdersTable rows={sellOrders} head selected="002" className="mb-2 h-[178px]" />
              <VScroll atEnd />
            </div>
            <div className="flex min-h-0 flex-1 justify-between overflow-hidden border-t border-[#8d98a5] bg-white">
              <OrdersTable rows={buyOrders} className="h-[194px]" />
              <VScroll />
            </div>
          </ChildWindow>

          <InfoPopup />
        </div>
      </main>

      <footer className="flex h-[19px] shrink-0 items-start gap-[2px] border-t border-[#a0a0a0] px-[6px] text-[11px] leading-4 text-[#444]">
        <div className="flex-1 border-t border-l border-[#b4b4b4] pl-[5px]">Połączony...</div>
        <div className="w-[170px] border-t border-l border-[#b4b4b4] text-center">FW20M12</div>
      </footer>
    </div>
  );
}
